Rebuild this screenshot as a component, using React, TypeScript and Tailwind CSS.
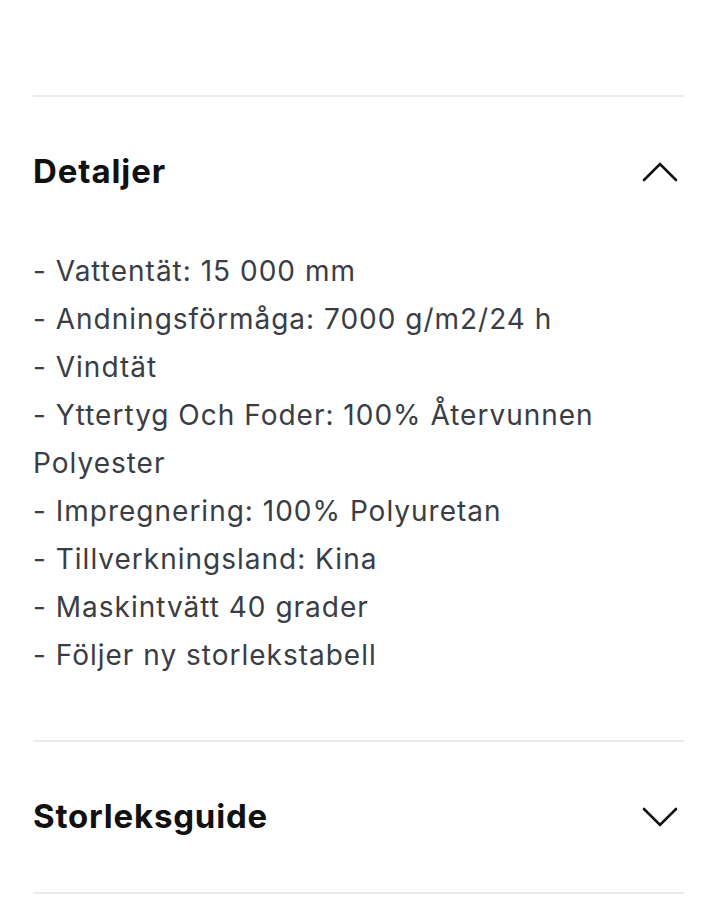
import React from "react";

const lines = [
  "- Vattentät: 15 000 mm",
  "- Andningsförmåga: 7000 g/m2/24 h",
  "- Vindtät",
  "- Yttertyg Och Foder: 100% Återvunnen Polyester",
  "- Impregnering: 100% Polyuretan",
  "- Tillverkningsland: Kina",
  "- Maskintvätt 40 grader",
  "- Följer ny storlekstabell",
];

function Chevron({ up }: { up?: boolean }) {
  return (
    <svg width="36" height="20" viewBox="0 0 36 20" fill="none">
      <path
        d={up ? "M2 18 L18 2 L34 18" : "M2 2 L18 18 L34 2"}
        stroke="#111"
        strokeWidth="2.6"
        strokeLinecap="round"
        strokeLinejoin="miter"
      />
    </svg>
  );
}

export default function App() {
  return (
    <div
      className="w-[717px] h-[900px] bg-white overflow-hidden"
      style={{ fontFamily: "Inter, 'Noto Sans', sans-serif" }}
    >
      <div className="px-[33px]">
        <div className="h-[95px]" />
        <div className="h-[2px] bg-[#ebebeb]" />
        <div className="h-[150px] flex items-center justify-between">
          <h2 className="text-[33px] font-bold text-[#111] tracking-[0.9px]">Detaljer</h2>
          <div className="mr-[6px]">
            <Chevron up />
          </div>
        </div>
        <div className="text-[28px] leading-[48px] text-[#3a3d44] tracking-[1px] pr-[40px]">
          {lines.map((l) => (
            <div key={l}>{l}</div>
          ))}
        </div>
        <div className="h-[61px]" />
        <div className="h-[2px] bg-[#ebebeb]" />
        <div className="h-[150px] flex items-center justify-between">
          <h2 className="text-[33px] font-bold text-[#111] tracking-[0.8px]">Storleksguide</h2>
          <div className="mr-[6px]">
            <Chevron />
          </div>
        </div>
        <div className="h-[2px] bg-[#ebebeb]" />
      </div>
    </div>
  );
}
